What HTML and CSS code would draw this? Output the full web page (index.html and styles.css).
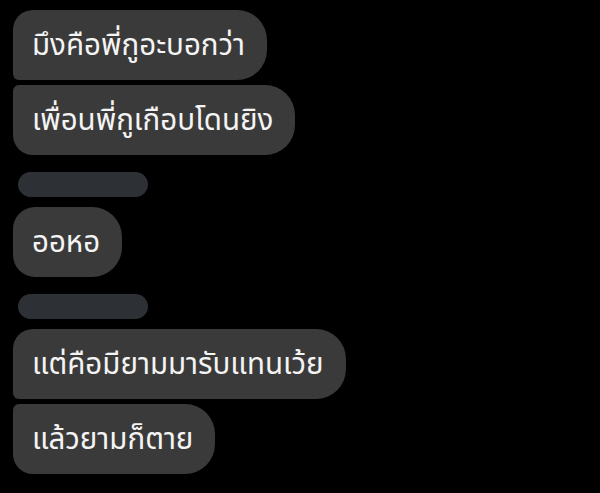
FILE: index.html
```html
<!DOCTYPE html>
<html lang="th">
<head>
<meta charset="utf-8">
<link rel="stylesheet" href="styles.css">
</head>
<body>
<div class="chat">
  <div class="group">
    <div class="bubble first">มึงคือพี่กูอะบอกว่า</div>
    <div class="bubble last">เพื่อนพี่กูเกือบโดนยิง</div>
  </div>
  <div class="name-bar"></div>
  <div class="group">
    <div class="bubble single">ออหอ</div>
  </div>
  <div class="name-bar"></div>
  <div class="group">
    <div class="bubble first">แต่คือมียามมารับแทนเว้ย</div>
    <div class="bubble last">แล้วยามก็ตาย</div>
  </div>
</div>
</body>
</html>
```
FILE: styles.css
```css
html, body {
  margin: 0;
  padding: 0;
  background: #000;
}
body {
  width: 600px;
  height: 493px;
  overflow: hidden;
  font-family: "Noto Sans Thai", "Noto Sans", "Liberation Sans", sans-serif;
}
.chat {
  display: flex;
  flex-direction: column;
  align-items: flex-start;
  padding: 10px 0 0 13px;
}
.group {
  display: flex;
  flex-direction: column;
  align-items: flex-start;
  gap: 5px;
}
.bubble {
  background: #3a3a3a;
  color: #f4f4f4;
  font-size: 29.5px;
  height: 70px;
  line-height: 72px;
  padding: 0 22px 0 19px;
  box-sizing: border-box;
  white-space: nowrap;
  border-radius: 30px;
}
.bubble.first {
  border-radius: 20px 30px 30px 6px;
}
.bubble.last {
  border-radius: 6px 30px 30px 20px;
}
.bubble.single {
  border-radius: 22px 30px 30px 22px;
}
.name-bar {
  width: 130px;
  height: 25px;
  border-radius: 13px;
  background: #2d3035;
  margin: 17px 0 10px 5px;
}
```
